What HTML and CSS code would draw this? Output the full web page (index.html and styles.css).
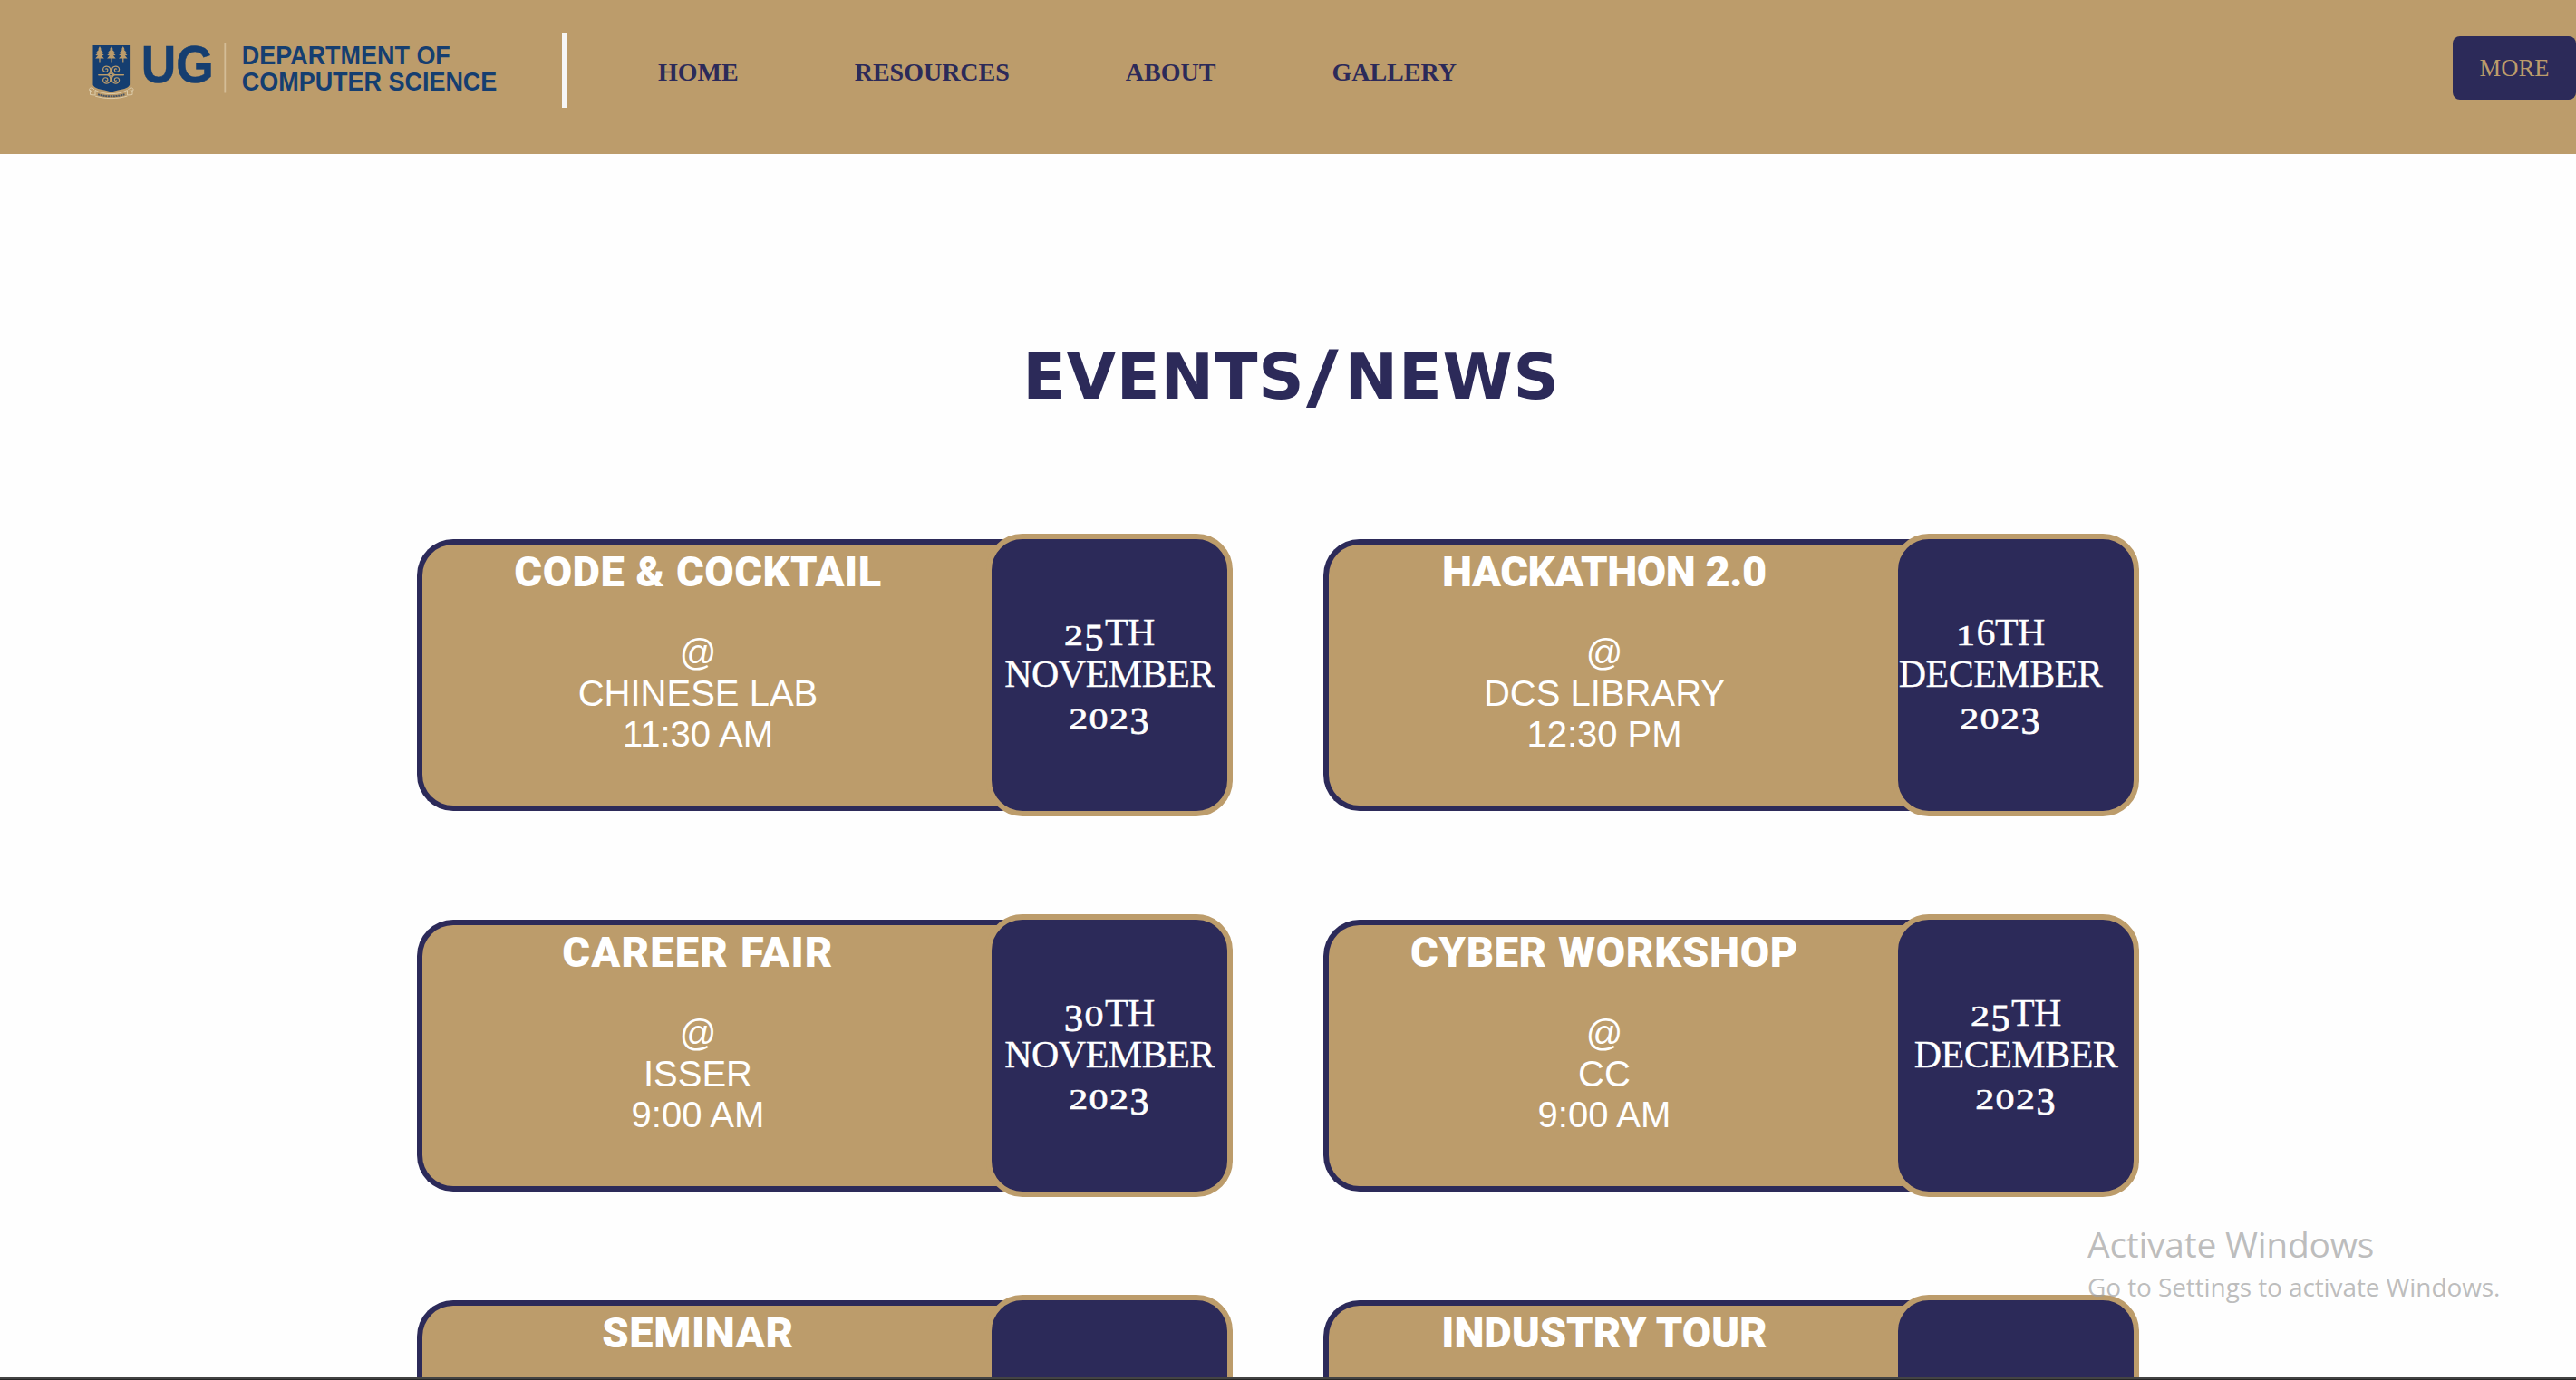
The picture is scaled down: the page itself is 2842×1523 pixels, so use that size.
FILE: index.html
```html
<!DOCTYPE html>
<html lang="en">
<head>
<meta charset="utf-8">
<title>Events/News - Department of Computer Science</title>
<link rel="stylesheet" href="styles.css">
</head>
<body>
<header class="header">
  <svg class="logo" viewBox="92 40 468 76" role="img" aria-label="UG Department of Computer Science">
    <path class="blue" d="M102.5 50h40.6v43.500c-.6 3-6 5-13 6l-7.300 2-7.300-2c-7-1-12.400-3-13-6z"/>
    <path class="gold-line" d="M102.500 69.500h40.600"/>
    <g class="gold">
      <path id="tree" d="M110 51l1.800 3.500-1 .2 3 3-2.300.2 3.200 3-2.700.3 2.800 3.200-4.200.2v4h-1.200v-4l-4.200-.2 2.800-3.200-2.700-.3 3.200-3-2.300-.2 3-3-1-.2z"/>
      <use href="#tree" x="12.900"/>
      <use href="#tree" x="25.800"/>
    </g>
    <g class="swirl">
      <path id="curl" d="M108.500 82.600h10c2.500-1 3.500-3 3.300-5.400-.3-5.200-8-5.500-8.200-.6 0 3.700 5.400 3.700 5.300.5-.1-1.500-2-1.700-2.500-.5"/>
      <use href="#curl" transform="matrix(-1 0 0 1 245.200 0)"/>
      <use href="#curl" transform="matrix(1 0 0 -1 0 165.200)"/>
      <use href="#curl" transform="matrix(-1 0 0 -1 245.200 165.200)"/>
      <path d="M122.600 80.500l2.500 2.100-2.500 2.100-2.500-2.100z"/>
    </g>
    <path class="ribbon" d="M104 99c-1.500-3-6-2.600-5.500.3.300 1.800 3 1.500 3 0M99.500 99v5.500l5.500.5v-5.500c10 5.500 25 5.500 35.500 0v5.500l5.500-.5V99M141.500 99c1.500-3 6-2.600 5.500.3-.3 1.800-3 1.500-3 0M105 106c10 3.500 25 3.500 35.500 0"/>
    <path class="motto" d="M108 104.300c9 2.700 20 2.700 29.500 0"/>
    <text class="wordmark" x="155.800" y="90.700" textLength="80" lengthAdjust="spacingAndGlyphs">UG</text>
    <path class="rule" d="M248.300 48v54.500"/>
    <text class="dept" x="266.800" y="71" textLength="230" lengthAdjust="spacingAndGlyphs">DEPARTMENT OF</text>
    <text class="dept" x="266.800" y="100" textLength="281.500" lengthAdjust="spacingAndGlyphs">COMPUTER SCIENCE</text>
  </svg>
  <span class="bar"></span>
  <nav class="nav">
    <a>HOME</a><a>RESOURCES</a><a>ABOUT</a><a>GALLERY</a>
  </nav>
  <button class="more">MORE</button>
</header>

<main class="main">
  <h1 class="heading">EVENTS<span class="slash">/</span>NEWS</h1>
  <section class="events">
    <article class="card">
      <div class="info"><h2 class="title t-code">CODE &amp; COCKTAIL</h2><p class="place">@<br>CHINESE LAB<br>11:30 AM</p></div>
      <p class="date"><span><i class="short">2</i><i class="drop">5</i>TH<br>NOVEMBER<br><i class="short">202</i><i class="drop">3</i></span></p>
    </article>
    <article class="card">
      <div class="info"><h2 class="title t-hack">HACKATHON 2.0</h2><p class="place">@<br>DCS LIBRARY<br>12:30 PM</p></div>
      <p class="date date-left"><span><i class="short">1</i>6TH<br>DECEMBER<br><i class="short">202</i><i class="drop">3</i></span></p>
    </article>
    <article class="card">
      <div class="info"><h2 class="title t-career">CAREER FAIR</h2><p class="place">@<br>ISSER<br>9:00 AM</p></div>
      <p class="date"><span><i class="drop">3</i><i class="short">0</i>TH<br>NOVEMBER<br><i class="short">202</i><i class="drop">3</i></span></p>
    </article>
    <article class="card">
      <div class="info"><h2 class="title t-cyber">CYBER WORKSHOP</h2><p class="place">@<br>CC<br>9:00 AM</p></div>
      <p class="date"><span><i class="short">2</i><i class="drop">5</i>TH<br>DECEMBER<br><i class="short">202</i><i class="drop">3</i></span></p>
    </article>
    <article class="card">
      <div class="info"><h2 class="title t-seminar">SEMINAR</h2></div>
      <p class="date"></p>
    </article>
    <article class="card">
      <div class="info"><h2 class="title t-tour">INDUSTRY TOUR</h2></div>
      <p class="date"></p>
    </article>
  </section>
</main>

<aside class="watermark">
  <p class="wm-title">Activate Windows</p>
  <p class="wm-text">Go to Settings to activate Windows.</p>
</aside>
<div class="edge"></div>
</body>
</html>
```
FILE: styles.css
```css
:root {
  --gold: #bc9c6b;
  --navy: #2c2a59;
  --blue: #153e70;
}
* { box-sizing: border-box; margin: 0; padding: 0; }
body {
  height: 1523px;
  overflow: hidden;
  background: #fefefe;
  font-family: "Liberation Serif", serif;
}

.header {
  display: flex;
  align-items: flex-start;
  height: 170px;
  padding-left: 92px;
  background: var(--gold);
}
.logo { width: 468px; height: 76px; margin-top: 40px; overflow: visible; }
.blue { fill: var(--blue); }
.gold { fill: var(--gold); }
.gold-line { stroke: var(--gold); stroke-width: 1; }
.swirl { fill: none; stroke: var(--gold); stroke-width: 1.2; }
.ribbon { fill: none; stroke: #dccba8; stroke-width: 1; }
.motto { fill: none; stroke: #4c5560; stroke-width: 2; stroke-dasharray: 2.200 .6; }
.rule { stroke: #d3bd97; stroke-width: 1.800; }
.wordmark, .dept { fill: var(--blue); font-family: "Liberation Sans", sans-serif; font-weight: 700; }
.wordmark { font-size: 58px; stroke: var(--blue); stroke-width: .5; }
.dept { font-size: 29px; }
.bar { width: 6px; height: 83px; margin: 36px 0 0 60px; background: #f6f6f6; }
.nav {
  display: flex;
  gap: 128px;
  margin: 64px 0 0 100px;
  color: var(--navy);
  font-size: 28px;
  font-weight: 700;
  line-height: 32px;
}
.more {
  width: 136px;
  height: 70px;
  margin: 40px 0 0 auto;
  border: 0;
  border-radius: 8px;
  background: var(--navy);
  color: var(--gold);
  font: 26.600px "Liberation Serif", serif;
}

.main { height: 1350px; overflow: hidden; padding: 205px 0 0 460px; }
.heading {
  width: 1929px;
  height: 82px;
  color: var(--navy);
  font: 700 70px/82px "DejaVu Sans", sans-serif;
  letter-spacing: .8px;
  text-align: center;
  white-space: nowrap;
}
.slash {
  display: inline-block;
  width: 44px;
  letter-spacing: 0;
  text-align: center;
  transform: translateX(-3px) scale(1.4, 1.130);
}

.events {
  display: grid;
  grid-template-columns: 900px 900px;
  grid-auto-rows: 300px;
  gap: 120px 100px;
  margin-top: 138px;
}
.card {
  display: flex;
  border: 6px solid var(--navy);
  border-right: 0;
  border-radius: 40px;
  background: var(--gold);
  color: #fff;
}
.info { width: 608px; padding-top: 3px; text-align: center; margin-right: 14px; }
.title {
  margin-bottom: 40px;
  font: 900 47px/54px Roboto, sans-serif;
}
.t-code { letter-spacing: .5px; }
.t-hack { letter-spacing: -.45px; }
.t-career { letter-spacing: 1.150px; }
.t-cyber { letter-spacing: .65px; }
.t-seminar { letter-spacing: .6px; }
.t-tour { letter-spacing: -.1px; }
.place { font: 40px/45px "Liberation Sans", sans-serif; }
.date {
  display: flex;
  flex: none;
  align-items: center;
  justify-content: center;
  width: 272px;
  height: 312px;
  margin-top: -12px;
  padding-bottom: 2px;
  border: 6px solid var(--gold);
  border-radius: 40px;
  background: var(--navy);
  font-size: 42px;
  line-height: 46px;
  letter-spacing: -.5px;
  text-align: center;
  -webkit-text-stroke: .3px #fff;
}
.date-left { padding-right: 34px; }

/* Old-style figures: short digits sit at x-height, others hang below the line */
.short, .drop { display: inline-block; font-style: normal; letter-spacing: 1.400px; -webkit-text-stroke: .8px #fff; }
.short { transform: scaleY(.77); transform-origin: 0 37px; }
.drop { transform: translateY(6px); }

.watermark {
  position: absolute;
  left: 2303px;
  top: 1346px;
  color: rgba(160, 160, 160, .7);
  font-family: "Open Sans", sans-serif;
  white-space: nowrap;
}
.wm-title { font-size: 39px; line-height: 54px; letter-spacing: -.25px; }
.wm-text { font-size: 28px; line-height: 40px; letter-spacing: -.1px; }
.edge {
  position: absolute;
  left: 0;
  right: 0;
  top: 1520px;
  height: 3px;
  background: #262626;
  border-top: 2px solid #444;
}
```
